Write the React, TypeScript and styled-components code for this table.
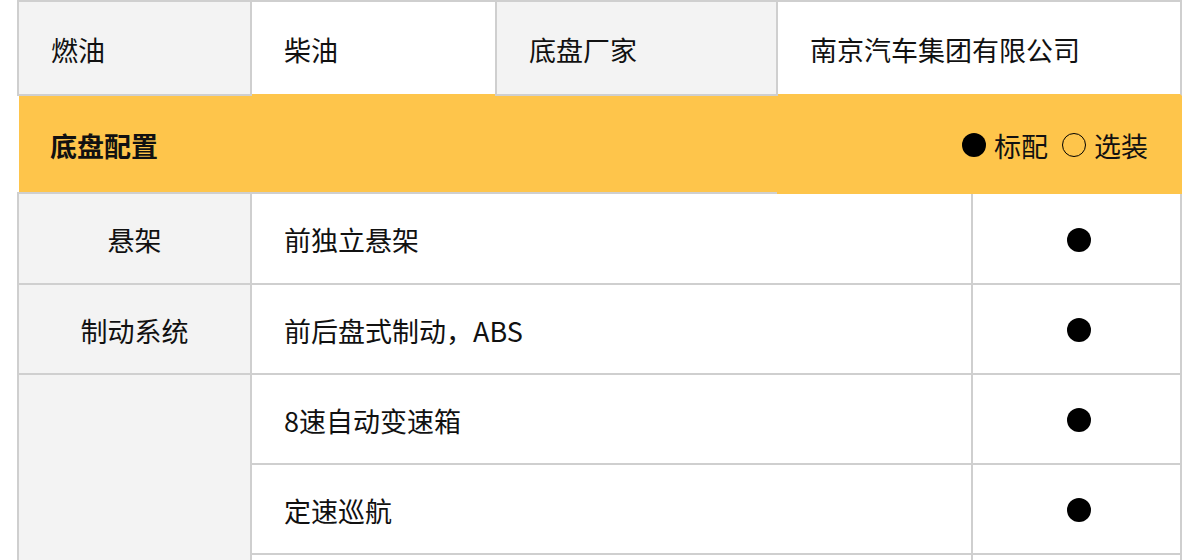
import styled, { createGlobalStyle } from 'styled-components';

const GlobalStyle = createGlobalStyle`
  html, body {
    margin: 0;
    padding: 0;
    overflow: hidden;
    background: #ffffff;
  }
  body {
    font-family: "Noto Sans CJK SC", "Noto Sans", sans-serif;
    color: #111111;
  }
`;

const LINE = '#cfcfcf';
const SHADE = '#f3f3f3';
const BAND = '#fec54b';

const Sheet = styled.div`
  width: 1165px;
  margin-left: 17px;
`;

const HeadRow = styled.div`
  display: flex;
  height: 96px;
`;

const HeadCell = styled.div<{ $shaded?: boolean; $w: number; $last?: boolean }>`
  box-sizing: border-box;
  width: ${(p) => p.$w}px;
  display: flex;
  align-items: center;
  padding: 2px 0 0 32px;
  font-size: 27px;
  background: ${(p) => (p.$shaded ? SHADE : '#ffffff')};
  border-top: 2px solid ${LINE};
  border-bottom: 2px solid ${(p) => (p.$shaded ? LINE : BAND)};
  border-left: ${(p) => (p.$shaded ? `2px solid ${LINE}` : 'none')};
  border-right: ${(p) => (p.$shaded || p.$last ? `2px solid ${LINE}` : 'none')};
`;

const Band = styled.div`
  box-sizing: border-box;
  height: 96px;
  margin-left: 2px;
  background: ${BAND};
  display: flex;
  align-items: center;
  justify-content: space-between;
  padding: 2px 34px 0 31px;
  font-size: 27px;
`;

const BandTitle = styled.span`
  font-weight: 700;
`;

const Legend = styled.div`
  display: flex;
  align-items: center;
`;

const LegendItem = styled.span`
  display: flex;
  align-items: center;
  gap: 8px;
  & + & {
    margin-left: 14px;
  }
`;

const Dot = styled.span<{ $hollow?: boolean }>`
  box-sizing: border-box;
  display: inline-block;
  width: 24px;
  height: 24px;
  border-radius: 50%;
  background: ${(p) => (p.$hollow ? 'transparent' : '#000000')};
  border: ${(p) => (p.$hollow ? '1.5px solid #000000' : 'none')};
`;

const Body = styled.div`
  display: grid;
  grid-template-columns: 231px 719px 207px;
  grid-template-rows: 89px 88px 88px 88px 88px;
  gap: 2px;
  padding: 2px 2px 0 2px;
  background:
    linear-gradient(to right, ${LINE} 760px, ${BAND} 760px) top left / 100% 2px no-repeat,
    ${LINE};
`;

const GroupCell = styled.div<{ $span?: number }>`
  background: ${SHADE};
  display: flex;
  align-items: center;
  justify-content: center;
  padding-top: 2px;
  font-size: 27px;
  ${(p) => (p.$span ? `grid-row: span ${p.$span};` : '')}
`;

const ItemCell = styled.div`
  background: #ffffff;
  display: flex;
  align-items: center;
  padding: 2px 0 0 32px;
  font-size: 27px;
`;

const MarkCell = styled.div`
  background: #ffffff;
  display: flex;
  align-items: center;
  justify-content: center;
  padding: 2px 0 0 5px;
`;

type Row = { group?: string; span?: number; item: string; mark: boolean };

const rows: Row[] = [
  { group: '悬架', item: '前独立悬架', mark: true },
  { group: '制动系统', item: '前后盘式制动，ABS', mark: true },
  { group: '', span: 3, item: '8速自动变速箱', mark: true },
  { item: '定速巡航', mark: true },
  { item: '', mark: false },
];

export default function App() {
  return (
    <>
      <GlobalStyle />
      <Sheet>
        <HeadRow>
          <HeadCell $shaded $w={235}>燃油</HeadCell>
          <HeadCell $w={243}>柴油</HeadCell>
          <HeadCell $shaded $w={283}>底盘厂家</HeadCell>
          <HeadCell $w={404} $last>南京汽车集团有限公司</HeadCell>
        </HeadRow>
        <Band>
          <BandTitle>底盘配置</BandTitle>
          <Legend>
            <LegendItem>
              <Dot />
              标配
            </LegendItem>
            <LegendItem>
              <Dot $hollow />
              选装
            </LegendItem>
          </Legend>
        </Band>
        <Body>
          {rows.flatMap((r, i) => [
            r.group !== undefined ? (
              <GroupCell key={`g${i}`} $span={r.span}>
                {r.group}
              </GroupCell>
            ) : null,
            <ItemCell key={`i${i}`}>{r.item}</ItemCell>,
            <MarkCell key={`m${i}`}>{r.mark && <Dot />}</MarkCell>,
          ])}
        </Body>
      </Sheet>
    </>
  );
}
